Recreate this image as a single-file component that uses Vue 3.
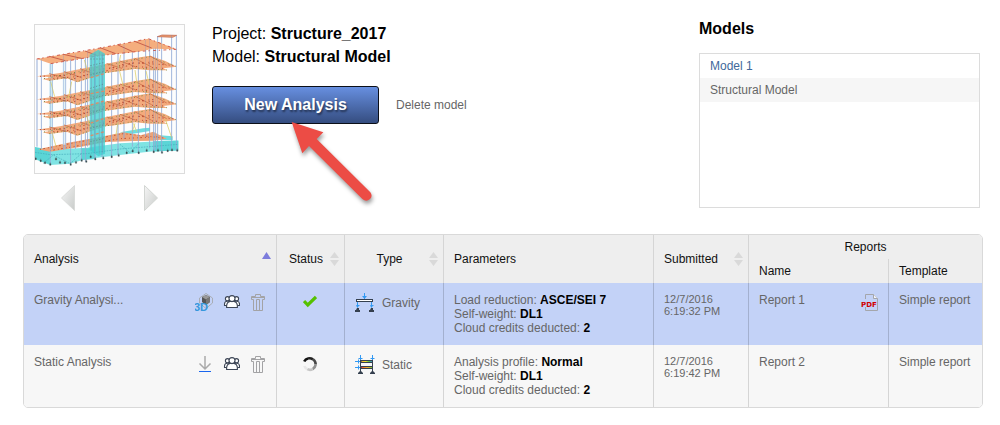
<script setup>
const models = [
  { name: 'Model 1', current: false },
  { name: 'Structural Model', current: true },
]

const analyses = [
  {
    name: 'Gravity Analysi...',
    selected: true,
    done: true,
    type: 'Gravity',
    parameters: [
      ['Load reduction', 'ASCE/SEI 7'],
      ['Self-weight', 'DL1'],
      ['Cloud credits deducted', '2'],
    ],
    date: '12/7/2016',
    time: '6:19:32 PM',
    report: 'Report 1',
    template: 'Simple report',
  },
  {
    name: 'Static Analysis',
    selected: false,
    done: false,
    type: 'Static',
    parameters: [
      ['Analysis profile', 'Normal'],
      ['Self-weight', 'DL1'],
      ['Cloud credits deducted', '2'],
    ],
    date: '12/7/2016',
    time: '6:19:42 PM',
    report: 'Report 2',
    template: 'Simple report',
  },
]

// Vertical shift of every intermediate floor below the first one
const floors = [0, 69, 113, 160]

// Building columns: x, top, bottom
const columns = [
  [51, 133, 395], [64, 131, 400], [91, 146, 448], [97, 145, 405], [131, 120, 405],
  [137, 135, 402], [152, 131, 445], [166, 118, 402], [184, 128, 437], [196, 126, 440],
  [203, 110, 395], [225, 104, 432], [246, 116, 425], [275, 118, 425], [294, 116, 420],
  [312, 88, 370], [337, 112, 395], [355, 108, 415], [377, 75, 365], [389, 72, 400],
  [401, 100, 410], [406, 98, 405], [413, 64, 400], [425, 66, 412], [455, 60, 402], [469, 62, 407],
]

const braces = [
  'M92 200L104 245', 'M155 200L145 250', 'M193 135L203 168', 'M198 300L212 335',
  'M302 120L294 160', 'M298 165L310 215', 'M345 165L352 215', 'M378 168L388 210',
  'M294 320L288 360', 'M340 325L350 350', 'M345 325L337 350', 'M436 312L455 368', 'M96 350L108 395',
]

const feet = [
  [47, 433], [62, 439], [75, 445], [91, 450], [108, 434], [120, 444], [135, 445], [152, 450],
  [168, 444], [185, 438], [199, 441], [212, 427], [226, 434], [250, 431], [275, 427], [296, 423],
  [320, 415], [338, 410], [356, 415], [380, 408], [401, 412], [414, 408], [426, 414], [443, 409],
  [456, 407], [472, 408],
]
</script>

<template>
  <main class="page">
    <section class="top">
      <div class="preview">
        <svg class="thumb" viewBox="45 30 447 444" role="img" aria-label="Structural model preview">
          <rect x="45" y="30" width="447" height="444" fill="#fdfdfd" />
          <path d="M45 396L90 404L200 398L300 385L475 376V407L400 409L300 420L195 433L150 446L90 450L45 433Z" fill="#7fe3e3" />
          <path d="M45 396L90 408V448L45 431ZM185 400H225V432L185 436ZM400 378H475V405L400 410Z" fill="#4fd0d2" opacity=".75" />
          <path d="M300 352L370 340L390 338V348L330 358ZM420 361L458 364V376H420Z" fill="#6cdcdf" />
          <path d="M55 403L140 384L240 366L310 352L362 361L400 350L440 371L400 377L340 378L260 381L180 396L90 410Z" fill="#eda377" />
          <path d="M60 403L240 369L310 356L430 369M90 407L200 388L300 371L420 365" fill="none" stroke="#c65336" stroke-width="3" stroke-dasharray="3 7 5 9" />

          <path v-for="(c, i) in columns" :key="'c' + i" :d="`M${c[0]} ${c[1]}V${c[2]}`" stroke="#a3b9dd" stroke-width="2.4" />
          <rect x="88" y="147" width="10" height="245" fill="#c5e8f4" opacity=".8" />
          <rect x="128" y="140" width="9" height="250" fill="#dceff6" opacity=".7" />

          <g v-for="f in floors" :key="f" :transform="`translate(0 ${f})`">
            <path d="M50 184L120 174L200 158L270 144L345 129L390 122L436 138L470 155L430 160L442 166L390 166L345 162L275 172L255 174L172 202L140 190L88 197L68 192L98 187Z" fill="#f3aa7c" />
            <path d="M88 176L140 190M132 170L185 188M180 161L224 177M260 146L306 160M300 138L346 155M344 130L395 156M390 123L440 151" stroke="#d27b51" stroke-width="3" fill="none" />
            <path d="M72 191L172 171L240 155L388 125L468 154M88 196L142 187L172 200L255 173L344 159L440 165" fill="none" stroke="#75893c" stroke-width="3" stroke-dasharray="3 11 2 7" />
            <path d="M60 184L140 181L228 164L280 158L340 143L460 151M100 190L170 185L245 171L320 153L430 160M152 194L208 178L310 148L410 140" fill="none" stroke="#b94631" stroke-width="3" stroke-dasharray="3 8 4 15" />
          </g>

          <path d="M50 132L130 118L195 108L240 99L300 88L345 79L385 71L420 83L469 103L400 101L355 110L240 122L182 131L92 146Z" fill="#f5ae7e" />
          <path d="M88 124L136 137M130 118L184 130M195 108L230 121M240 98L287 116M292 89L338 110M344 79L395 99" stroke="#c9604b" stroke-width="3" fill="none" />
          <path d="M50 132L130 118L240 99L345 79L385 71L469 103M92 146L182 131L240 122L355 109L469 103" fill="none" stroke="#cc493a" stroke-width="2.6" stroke-dasharray="9 8 4 10" />
          <path d="M412 65L426 60L470 61L458 67Z" fill="#ed9e70" stroke="#b9604a" stroke-width="2" />

          <path d="M209 119L235 104L255 116V416L235 424L209 405Z" fill="#3fd0d1" opacity=".77" />
          <path d="M214 120V406M224 115V410M238 110V418M248 116V414" stroke="#75a6bd" stroke-width="2" fill="none" />
          <path d="M211 132H254M211 152L254 142M211 180L254 169M211 220L254 206M211 252L254 240M211 295L254 280M211 340L254 329M211 380L254 370" stroke="#5d9b95" stroke-width="3" stroke-dasharray="4 5" />
          <path d="M212 188L253 176M212 236L253 228M212 270L253 258M212 324L253 310M212 362L253 350" stroke="#d98e68" stroke-width="4" stroke-dasharray="9 7" />

          <path v-for="d in braces" :key="d" :d="d" stroke="#ddcf68" stroke-width="2.3" fill="none" />
          <path v-for="(c, i) in columns" :key="'f' + i" :d="`M${c[0]} ${c[1]}V${c[2]}`" stroke="#6f8fc9" stroke-width="1.5" opacity=".6" />
          <path d="M45 412L90 419L200 416L300 402L475 388M70 445L100 420L150 446L185 415M300 388L330 413L356 386" stroke="#43aaba" stroke-width="2" fill="none" stroke-dasharray="5 3" />
          <path v-for="(p, i) in feet" :key="'p' + i" :d="`M${p[0]} ${p[1] - 8}v4m-2 0h4v5h-4z`" fill="#3e5156" stroke="#3e5156" stroke-width="1" />
        </svg>
        <div class="pager">
          <button type="button" aria-label="Previous model">
            <svg width="14" height="26" viewBox="0 0 14 26">
              <defs><linearGradient id="shade" x2="1" y2="1"><stop stop-color="#f5f5f5" /><stop offset="1" stop-color="#c9ccca" /></linearGradient></defs>
              <path d="M13.5 .5V25.5L.5 13Z" fill="url(#shade)" stroke="#dadcda" />
            </svg>
          </button>
          <button type="button" aria-label="Next model">
            <svg width="14" height="26" viewBox="0 0 14 26"><path d="M.5 .5V25.5L13.5 13Z" fill="url(#shade)" stroke="#d3d6d3" /></svg>
          </button>
        </div>
      </div>

      <div class="details">
        <p>Project: <strong>Structure_2017</strong></p>
        <p>Model: <strong>Structural Model</strong></p>
        <div class="actions">
          <button type="button" class="primary">New Analysis</button>
          <a href="#" class="delete">Delete model</a>
          <svg class="pointer" viewBox="264 324 270 270" aria-hidden="true">
            <path d="M275 336L370 367L350 387L511 547Q519 558 510 567Q499 577 488 568L327 408L307 430Z" fill="#ec4c45" />
          </svg>
        </div>
      </div>

      <aside class="models">
        <h2>Models</h2>
        <ul>
          <li v-for="m in models" :key="m.name" :class="{ current: m.current }">
            <span v-if="m.current">{{ m.name }}</span>
            <a v-else href="#">{{ m.name }}</a>
          </li>
        </ul>
      </aside>
    </section>

    <table class="grid">
      <colgroup>
        <col class="c-analysis" /><col class="c-status" /><col class="c-type" /><col />
        <col class="c-submitted" /><col class="c-name" /><col class="c-template" />
      </colgroup>
      <thead>
        <tr>
          <th rowspan="2" aria-sort="ascending">
            <button type="button" class="sort left">
              <span>Analysis</span>
              <svg width="9" height="14" viewBox="0 0 9 14"><path d="M4.5 0L9 7H0Z" fill="#7c7cdc" /></svg>
            </button>
          </th>
          <th rowspan="2">
            <button type="button" class="sort">
              <span>Status</span>
              <svg width="9" height="14" viewBox="0 0 9 14"><path d="M4.5 0L9 6H0ZM0 8H9L4.5 14Z" fill="#d9d9d9" /></svg>
            </button>
          </th>
          <th rowspan="2">
            <button type="button" class="sort">
              <span>Type</span>
              <svg width="9" height="14" viewBox="0 0 9 14"><path d="M4.5 0L9 6H0ZM0 8H9L4.5 14Z" fill="#d9d9d9" /></svg>
            </button>
          </th>
          <th rowspan="2" class="plain">Parameters</th>
          <th rowspan="2">
            <button type="button" class="sort left">
              <span>Submitted</span>
              <svg width="9" height="14" viewBox="0 0 9 14"><path d="M4.5 0L9 6H0ZM0 8H9L4.5 14Z" fill="#d9d9d9" /></svg>
            </button>
          </th>
          <th colspan="2" class="group">Reports</th>
        </tr>
        <tr>
          <th class="plain">Name</th>
          <th class="plain">Template</th>
        </tr>
      </thead>
      <tbody>
        <tr v-for="a in analyses" :key="a.name" :class="{ selected: a.selected }">
          <td>
            <div class="split">
              <span>{{ a.name }}</span>
              <div class="icons">
                <button v-if="a.done" type="button" aria-label="View in 3D">
                  <svg width="18" height="20" viewBox="0 0 18 20">
                    <path d="M11 .5L17.5 5V10L11 15.5L4.5 10V5Z" fill="none" stroke="#a9adb5" />
                    <path d="M11 2L15 4V9L11 12L7 9V4Z" fill="#555" />
                    <path d="M11 2L15 4L11 6.5L7 4Z" fill="#999" />
                    <path d="M11 6.5L15 4V9L11 12Z" fill="#777" />
                    <text x="-1" y="18" class="three-d">3D</text>
                  </svg>
                </button>
                <button v-else type="button" aria-label="Download">
                  <svg width="18" height="20" viewBox="0 0 18 20">
                    <path d="M10 1V14M4.5 8.5L10 14L15.5 8.5" fill="none" stroke="#aaa" stroke-width="1.5" />
                    <path d="M4 16.5H16" stroke="#1a66ee" />
                  </svg>
                </button>
                <button type="button" aria-label="Share">
                  <svg width="18" height="20" viewBox="0 0 18 20">
                    <g fill="#fff" stroke="#3d4656" stroke-width="1.1">
                      <circle cx="5.5" cy="5.7" r="2.1" />
                      <circle cx="14.5" cy="5.7" r="2.1" />
                      <path d="M6.5 12.5H2.5V11Q2.5 8.3 5.2 8.2H7M13.5 12.5H17.5V11Q17.5 8.3 14.8 8.2H13" />
                      <path d="M4.6 14.5Q4.3 8.8 8.2 8.4H11.8Q15.7 8.8 15.4 14.5Z" />
                      <circle cx="10" cy="5.6" r="3" />
                    </g>
                  </svg>
                </button>
                <button type="button" aria-label="Delete analysis">
                  <svg width="18" height="20" viewBox="0 0 18 20">
                    <path d="M2.5 6.5V3.5H6.5V1.5H11.5V3.5H15.5V6.5H13.5V17.5H4.5V6.5ZM2.5 4.5H15.5M7.5 17V6.5H10.5V17" fill="none" stroke="#a3a3a5" />
                  </svg>
                </button>
              </div>
            </div>
          </td>
          <td class="status">
            <svg v-if="a.done" width="14" height="18" viewBox="0 0 14 18" role="img" aria-label="Completed">
              <path d="M1 8L4.8 12L13 4" fill="none" stroke="#56c100" stroke-width="3.2" />
            </svg>
            <svg v-else width="14" height="18" viewBox="0 0 14 18" role="img" aria-label="Running">
              <g fill="none" stroke-width="2.6">
                <path d="M1.2 6.5Q2.5 3.9 5 3.4" stroke="#111" />
                <path d="M5 3.4Q7.5 2.7 10 4.3" stroke="#222" />
                <path d="M10 4.3Q12.7 6.3 12.7 9.5" stroke="#494949" />
                <path d="M12.7 9.5Q12.2 12.7 9.7 14.1" stroke="#919191" />
                <path d="M9.7 14.1Q7 15.5 4.3 14.2" stroke="#c5c5c5" />
                <path d="M4.3 14.2Q2 13 1.4 11" stroke="#e8e8e8" />
              </g>
            </svg>
          </td>
          <td>
            <div class="type">
              <svg v-if="a.type === 'Gravity'" width="20" height="20" viewBox="0 0 20 20" aria-hidden="true">
                <g fill="none">
                  <path d="M9.5 0V6M2.5 9V14M16.5 9V14" stroke="#3399f2" />
                  <path d="M7.5 3.5H11.5M1.5 12.5H4.5M15.5 12.5H18.5" stroke="#3399f2" />
                  <path d="M9.5 6L7.5 3.5H11.5ZM2.5 15L1 12.5H4ZM16.5 15L15 12.5H18Z" fill="#3399f2" />
                  <rect x="1.5" y="6.5" width="16" height="2" fill="#fff" stroke="#35404f" />
                </g>
                <path d="M2 15H4V17H5V19H0V17H1ZM16 15H18V17H19V19H14V17H15Z" fill="#35404f" />
              </svg>
              <svg v-else width="20" height="20" viewBox="0 0 20 20" aria-hidden="true">
                <defs>
                  <linearGradient id="stress"><stop stop-color="#f0a52c" /><stop offset=".4" stop-color="#f0e02a" /><stop offset=".7" stop-color="#51c146" /><stop offset="1" stop-color="#3187ed" /></linearGradient>
                  <linearGradient id="strain"><stop stop-color="#e23b30" /><stop offset=".5" stop-color="#f5a829" /><stop offset="1" stop-color="#7acb36" /></linearGradient>
                </defs>
                <path d="M6 5.5H17.5V7.5H6Z" fill="url(#stress)" stroke="#35404f" />
                <path d="M6 11.5H17.5V13.5H6Z" fill="url(#strain)" stroke="#35404f" />
                <path d="M5.5 5V17M17.5 5V17" stroke="#35404f" />
                <path d="M5.5 0V5M17.5 0V5M3.5 3.5H7.5M15.5 3.5H19.5M0 6.5H5M0 12.5H5M3.5 4.5V8.5M3.5 10.5V14.5" stroke="#3399f2" />
                <path d="M5 15H6V16.500H7V17.500H8V19H3V17.500H4V16.500H5ZM17 15H18V16.500H19V17.500H20V19H15V17.500H16V16.500H17Z" fill="#35404f" />
              </svg>
              <span>{{ a.type }}</span>
            </div>
          </td>
          <td>
            <div v-for="p in a.parameters" :key="p[0]">{{ p[0] }}: <strong>{{ p[1] }}</strong></div>
          </td>
          <td class="date">{{ a.date }}<br />{{ a.time }}</td>
          <td>
            <div class="split">
              <span>{{ a.report }}</span>
              <button v-if="a.done" type="button" aria-label="Open PDF report">
                <svg width="18" height="20" viewBox="0 0 18 20">
                  <path d="M4.500 6V1.500H12.500L16.500 5.500V17.500H4.500V14" fill="none" stroke="#a4a6ab" />
                  <path d="M12.500 1.500V5.500H16.500" fill="#f2f4fa" stroke="#a4a6ab" />
                  <text x="0" y="14" class="pdf">PDF</text>
                </svg>
              </button>
            </div>
          </td>
          <td>{{ a.template }}</td>
        </tr>
      </tbody>
    </table>
  </main>
</template>

<style>
body {
  margin: 0;
  background: #fff;
}
</style>

<style scoped>
.page {
  padding: 20px 17px 17px 23px;
  font-family: "Liberation Sans", Arial, sans-serif;
  font-size: 12px;
  line-height: 14px;
  color: #666;
}
.page *,
.page {
  box-sizing: border-box;
}
button {
  padding: 0;
  border: 0;
  background: none;
  font: inherit;
  color: inherit;
  cursor: pointer;
}
svg {
  display: block;
  flex: none;
}
a {
  color: inherit;
  text-decoration: none;
}
strong {
  color: #000;
}

.top {
  display: flex;
  padding: 0 3px 0 11px;
  margin-bottom: 23px;
}
.preview {
  padding-top: 4px;
  margin-right: 27px;
}
.thumb {
  width: 151px;
  height: 150px;
  border: 1px solid #dcdcdc;
}
.pager {
  display: flex;
  justify-content: space-between;
  padding: 11px 27px 0;
}
.details {
  flex: 1;
  padding-top: 2px;
  color: #000;
}
.details p {
  margin: 0;
  font-size: 16px;
  line-height: 23px;
}
.actions {
  position: relative;
  display: flex;
  align-items: center;
  gap: 17px;
  margin-top: 18px;
}
.primary {
  width: 167px;
  height: 38px;
  border: 1px solid #0b0f18;
  border-radius: 3px;
  background: linear-gradient(#678fe0, #354d80);
  color: #fff;
  font-size: 16px;
  font-weight: bold;
  text-shadow: 1px 2px 2px rgba(0, 0, 0, 0.5);
}
.delete {
  color: #666;
}
.pointer {
  position: absolute;
  left: 76px;
  top: 32px;
  width: 90px;
  height: 90px;
  overflow: visible;
  pointer-events: none;
  filter: drop-shadow(1px 3px 2px rgba(0, 0, 0, 0.4));
}
.models {
  width: 281px;
}
.models h2 {
  margin: 0 0 15px;
  font-size: 16px;
  line-height: 18px;
  color: #000;
}
.models ul {
  min-height: 155px;
  margin: 0;
  padding: 0;
  border: 1px solid #dcdcdc;
  list-style: none;
}
.models li {
  padding: 0 10px;
  line-height: 24px;
  color: #41699b;
}
.models .current {
  background: #f6f6f6;
  color: #666;
}

.grid {
  width: 100%;
  table-layout: fixed;
  border: 1px solid #d9d9d9;
  border-radius: 5px;
  border-collapse: separate;
  border-spacing: 0;
  overflow: hidden;
}
.c-analysis { width: 253px; }
.c-status { width: 68px; }
.c-type { width: 99px; }
.c-submitted { width: 95px; }
.c-name { width: 140px; }
.c-template { width: 93px; }

th {
  height: 24px;
  padding: 0 5px;
  border-right: 1px solid #d5d5d5;
  background: #eee;
  color: #111;
  font-weight: normal;
}
.plain {
  padding-left: 10px;
  text-align: left;
}
.group,
tr + tr th:last-child,
td:last-child {
  border-right: 0;
}
.sort {
  display: flex;
  align-items: center;
  width: 100%;
}
.sort span {
  flex: 1;
}
.left span {
  padding-left: 5px;
  text-align: left;
}
td {
  height: 62px;
  padding: 10px 0 10px 10px;
  border-right: 1px solid #d5d5d5;
  background: #f7f7f7;
  vertical-align: top;
  white-space: nowrap;
}
.selected td {
  border-right-color: #a3b0cf;
  background: #c3d2f7;
}
.selected td:last-child {
  border-right: 0;
}
.split {
  display: flex;
  justify-content: space-between;
  padding-right: 9px;
}
.icons {
  display: flex;
  gap: 9px;
}
.status {
  padding-left: 26px;
}
.type {
  display: flex;
  align-items: center;
  gap: 7px;
}
.date {
  font-size: 11px;
  line-height: 12px;
}
.three-d {
  fill: #3597dc;
  font-size: 11px;
  font-weight: bold;
}
.pdf {
  fill: #d00000;
  font-family: "DejaVu Sans", sans-serif;
  font-size: 7px;
  font-weight: bold;
}
</style>
